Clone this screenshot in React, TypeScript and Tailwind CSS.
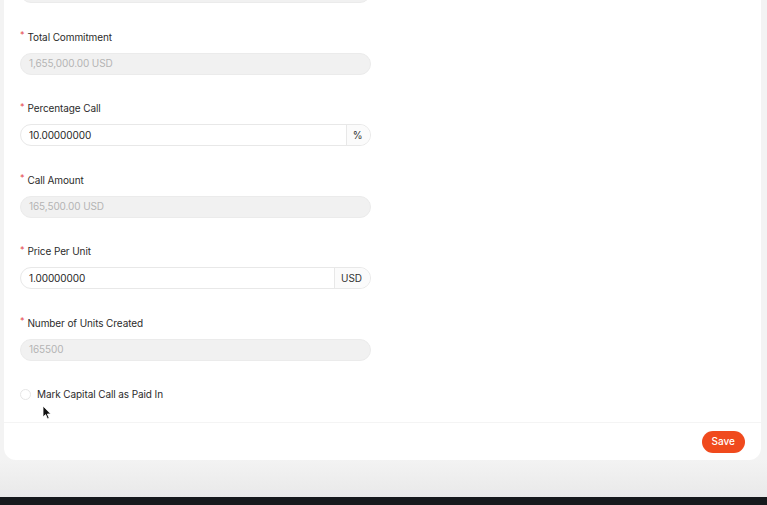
import React from 'react';

const font = { fontFamily: 'Inter, "Noto Sans", sans-serif' };

function Label({ text }: { text: string }) {
  return (
    <div className="flex items-center h-4 text-[10px] tracking-[-0.01em] text-[#2b2b2b] leading-4">
      <span className="text-[#e5484d] text-[9px] mr-[3px] -mt-[3px]">*</span>
      <span>{text}</span>
    </div>
  );
}

function DisabledInput({ value }: { value: string }) {
  return (
    <div className="h-[22px] w-[351px] rounded-full bg-[#f1f1f1] border border-[#ebebeb] flex items-center px-2 text-[10px] tracking-[-0.01em] text-[#b4b4b4]">
      {value}
    </div>
  );
}

function AddonInput({ value, addon, addonWidth }: { value: string; addon: string; addonWidth: string }) {
  return (
    <div className="h-[22px] w-[351px] rounded-full bg-white border border-[#e8e8e8] flex items-stretch text-[10px] tracking-[-0.01em] overflow-hidden">
      <div className="flex-1 flex items-center px-2 text-[#1f1f1f]">{value}</div>
      <div className={`${addonWidth} border-l border-[#e8e8e8] bg-[#fbfbfb] flex items-center justify-center text-[#333] pr-[2px]`}>
        {addon}
      </div>
    </div>
  );
}

function Field({ label, children }: { label: string; children: React.ReactNode }) {
  return (
    <div className="flex flex-col gap-2">
      <Label text={label} />
      {children}
    </div>
  );
}

export default function App() {
  return (
    <div style={font} className="relative w-[767px] h-[505px] overflow-hidden bg-[#f3f3f3] flex flex-col">
      <div className="ml-[4px] mr-[6px] bg-white rounded-b-xl flex flex-col">
        <div className="px-4 flex flex-col gap-[25.5px]">
          <div className="-mt-[19px]">
            <DisabledInput value="" />
          </div>
          <Field label="Total Commitment">
            <DisabledInput value="1,655,000.00 USD" />
          </Field>
          <Field label="Percentage Call">
            <AddonInput value="10.00000000" addon="%" addonWidth="w-[24px]" />
          </Field>
          <Field label="Call Amount">
            <DisabledInput value="165,500.00 USD" />
          </Field>
          <Field label="Price Per Unit">
            <AddonInput value="1.00000000" addon="USD" addonWidth="w-[36px]" />
          </Field>
          <Field label="Number of Units Created">
            <DisabledInput value="165500" />
          </Field>
        </div>

        <div className="px-4 mt-[28px] flex items-center gap-[6px] h-3">
          <span className="w-[11px] h-[11px] rounded-full border border-[#e6e6e6] bg-white" />
          <span className="text-[10px] tracking-[-0.01em] text-[#2b2b2b]">Mark Capital Call as Paid In</span>
        </div>

        <div className="mt-[21px] border-t border-[#f4f4f4] flex justify-end px-4 pt-[8px] pb-[7px]">
          <button className="h-[22px] px-[10px] rounded-full bg-[#f04a1d] text-white text-[10px] font-medium">
            Save
          </button>
        </div>
      </div>

      <div className="flex-1 bg-gradient-to-b from-[#f3f3f3] to-[#e9e9e9]" />
      <div className="h-[8px] bg-[#16191c]" />

      <svg className="absolute left-[42px] top-[405px]" width="10" height="15" viewBox="0 0 10 15">
        <path d="M1 1 L1 12 L3.6 9.6 L5.5 14 L7.2 13.2 L5.4 9 L8.8 9 Z" fill="#111" stroke="#fff" strokeWidth="0.8" />
      </svg>
    </div>
  );
}
